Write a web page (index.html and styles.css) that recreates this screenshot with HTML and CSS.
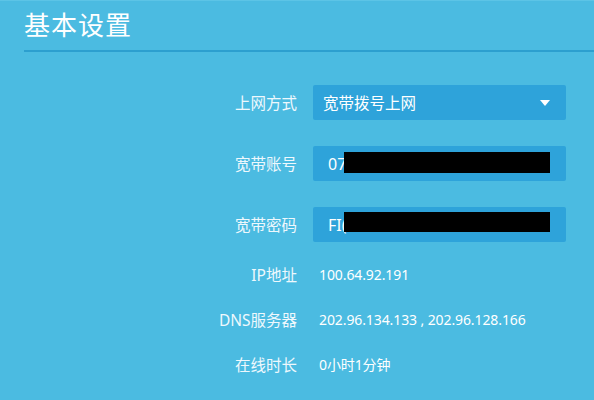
FILE: index.html
```html
<!DOCTYPE html>
<html lang="zh-CN">
<head>
<meta charset="utf-8">
<title>基本设置</title>
<link rel="stylesheet" href="styles.css">
</head>
<body>
<div class="page">
  <div class="header"><h1 class="title">基本设置</h1></div>
  <div class="form">
    <div class="row">
      <div class="label">上网方式</div>
      <div class="box select">
        <span class="val">宽带拨号上网</span>
        <span class="arrow"></span>
      </div>
    </div>
    <div class="row">
      <div class="label">宽带账号</div>
      <div class="box">
        <span class="val mono">07</span>
        <span class="redact r1"></span>
      </div>
    </div>
    <div class="row">
      <div class="label">宽带密码</div>
      <div class="box">
        <span class="val mono">FI(</span>
        <span class="redact r2"></span>
      </div>
    </div>
  </div>
  <div class="info">
    <div class="irow"><div class="label">IP地址</div><div class="text">100.64.92.191</div></div>
    <div class="irow"><div class="label">DNS服务器</div><div class="text">202.96.134.133 , 202.96.128.166</div></div>
    <div class="irow"><div class="label">在线时长</div><div class="text">0小时1分钟</div></div>
  </div>
</div>
</body>
</html>
```

FILE: styles.css
```css
html, body {
  margin: 0;
  padding: 0;
}
body {
  background: #4bbbe1;
  font-family: "Noto Sans", "Noto Sans CJK SC", sans-serif;
  color: #ffffff;
  width: 594px;
  height: 400px;
  overflow: hidden;
}
.page {
  border-top: 1px solid #5cc4e6;
}
.header {
  margin-left: 24px;
  border-bottom: 2px solid #2c9fcf;
  height: 49px;
}
.title {
  margin: 0;
  font-weight: normal;
  font-size: 26px;
  line-height: 49px;
  color: #ffffff;
  letter-spacing: 1px;
}
.form {
  margin-top: 33px;
  display: flex;
  flex-direction: column;
  gap: 26px;
}
.row {
  display: grid;
  grid-template-columns: 297px 253px;
  column-gap: 16px;
  align-items: center;
  height: 35px;
}
.label {
  text-align: right;
  font-size: 15.5px;
  color: #eef8fd;
  line-height: 20px;
}
.box {
  position: relative;
  height: 35px;
  background: #2ea3da;
  border-radius: 2px;
  display: flex;
  align-items: center;
  padding: 0 16px 0 10px;
  box-sizing: border-box;
}
.val {
  font-size: 15.5px;
  line-height: 20px;
  color: #ffffff;
}
.mono {
  margin-left: 5px;
  font-size: 16px;
}
.select {
  justify-content: space-between;
}
.arrow {
  width: 0;
  height: 0;
  border-left: 5px solid transparent;
  border-right: 5px solid transparent;
  border-top: 6px solid #ffffff;
}
.redact {
  position: absolute;
  left: 31px;
  width: 206px;
  background: #000000;
}
.r1 {
  top: 6px;
  height: 21px;
}
.r2 {
  top: 5px;
  height: 20px;
}
.info {
  margin-top: 10px;
}
.irow {
  display: grid;
  grid-template-columns: 297px auto;
  column-gap: 22px;
  align-items: center;
  height: 45px;
}
.text {
  font-size: 14px;
  letter-spacing: -0.1px;
  line-height: 20px;
  color: #ffffff;
}
```
